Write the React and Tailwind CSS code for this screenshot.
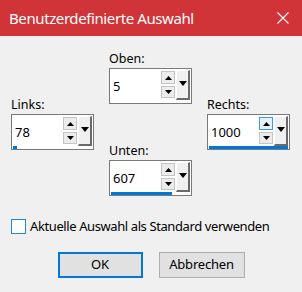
import React from "react";

function Up() {
  return (
    <svg width="7" height="4" viewBox="0 0 7 4"><path d="M0 4 L3.5 0 L7 4 Z" fill="#000" /></svg>
  );
}
function Down({ w = 7, h = 4 }) {
  return (
    <svg width={w} height={h} viewBox={`0 0 ${w} ${h}`}><path d={`M0 0 L${w / 2} ${h} L${w} 0 Z`} fill="#000" /></svg>
  );
}

function Spin({ label, value, bar, hot, className = "" }) {
  return (
    <div className={"flex flex-col " + className}>
      <div className="h-[18px] text-[12.5px] leading-[18px] text-black">{label}</div>
      <div className="flex h-[36px] w-[83px] flex-col border border-[#7a7a7a] bg-white">
        <div className="flex h-[31px]">
          <div className="flex-1 pl-[3px] pt-[3px] text-[13px] leading-[28px] text-black">{value}</div>
          <div className="flex w-[14px] flex-col gap-[2px] pt-[2px]">
            <div
              className={
                "flex h-[13px] items-center justify-center border " +
                (hot ? "border-[#3c9be8] bg-[#e5f1fb]" : "border-[#c4c4c4] bg-[#ececec]")
              }
            >
              <Up />
            </div>
            <div className="flex h-[12px] items-center justify-center border border-[#c4c4c4] bg-[#ececec]">
              <Down />
            </div>
          </div>
          <div className="ml-[1px] mr-[1px] mt-[1px] flex h-[30px] w-[14px] items-start justify-center border-b-2 border-l border-r-2 border-t border-b-[#6a6a6a] border-l-white border-r-[#6a6a6a] border-t-white bg-[#f0f0f0] pt-[10px]">
            <Down w={8} h={5} />
          </div>
        </div>
        <div className="flex h-[3px] px-[1px]">
          <div className="h-full bg-[#0078d7]" style={{ width: bar }} />
        </div>
      </div>
    </div>
  );
}

export default function App() {
  return (
    <div className="h-[292px] w-[302px] bg-[#f0f0f0] font-['Segoe_UI','Noto_Sans',sans-serif] text-black">
      <div className="flex h-[36px] items-center justify-between bg-[#d13438] pl-[9px] pr-[13px]">
        <span className="text-[15px] tracking-[-0.4px] text-white">Benutzerdefinierte Auswahl</span>
        <svg width="12" height="12" viewBox="0 0 12 12">
          <path d="M0.5 0.5 L11.5 11.5 M11.5 0.5 L0.5 11.5" stroke="#fff" strokeWidth="1.1" />
        </svg>
      </div>
      <div className="flex gap-[15px] px-[11px] pt-[14px]">
        <Spin label="Links:" value="78" bar="4px" className="mt-[46px]" />
        <div className="flex flex-col">
          <Spin label="Oben:" value="5" bar="0px" />
          <Spin label="Unten:" value="607" bar="61px" className="mt-[38px]" />
        </div>
        <Spin label="Rechts:" value="1000" bar="80px" hot className="mt-[46px]" />
      </div>
      <div className="mt-[23px] flex items-center pl-[11px]">
        <div className="h-[15px] w-[15px] border border-[#1e88dc] bg-white" />
        <span className="ml-[4px] text-[13px] leading-[15px] tracking-[-0.4px]">Aktuelle Auswahl als Standard verwenden</span>
      </div>
      <div className="mt-[18px] flex justify-center gap-[16px]">
        <button className="flex h-[26px] w-[85px] items-center justify-center border-2 border-[#0078d7] bg-[#e1e1e1] text-[13px]">
          OK
        </button>
        <button className="flex h-[26px] w-[86px] items-center justify-center border border-[#adadad] bg-[#e1e1e1] text-[13px] tracking-[-0.2px]">
          Abbrechen
        </button>
      </div>
    </div>
  );
}
